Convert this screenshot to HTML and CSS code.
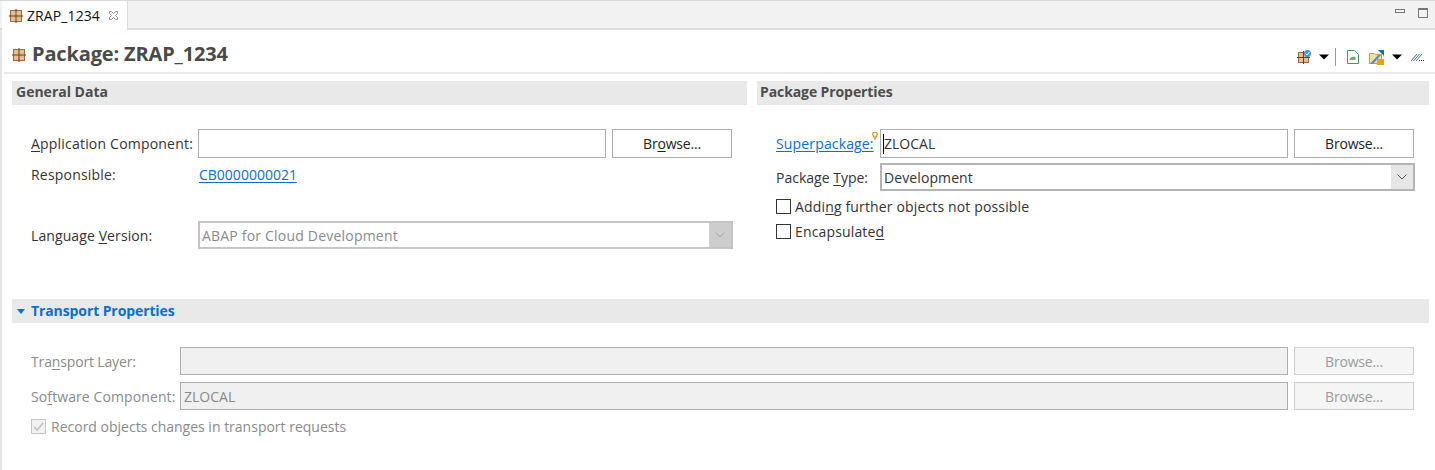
FILE: index.html
```html
<!DOCTYPE html>
<html>
	<head>
		<title>Package: ZRAP_1234</title>
		<link rel="stylesheet" href="styles.css">
	</head>
	<body>
		<svg class="defs" width="0" height="0">
			<symbol id="pkg" viewBox="0 0 14 14">
				<rect x="1.500" y="1.500" width="11" height="11" fill="#e3c08f" stroke="#a5673a"/>
				<path d="M7 0v14M0 7h14" stroke="#6b3d22" stroke-width="1"/>
			</symbol>
			<symbol id="caret" viewBox="0 0 10 6">
				<path d="M0 .5h10L5 5.500z" fill="#000"/>
			</symbol>
		</svg>

		<div class="tabbar">
			<div class="tab">
				<svg class="icon"><use href="#pkg"/></svg>
				<span class="tab-name">ZRAP_1234</span>
				<svg class="tab-close" viewBox="0 0 11 11"><path d="M1.500 1.500h2l2 2 2-2h2v2l-2 2 2 2v2h-2l-2-2-2 2h-2v-2l2-2-2-2z" fill="#fff" stroke="#8c8c8c"/></svg>
			</div>
			<div class="view-btns">
				<span class="min-btn"></span>
				<span class="max-btn"></span>
			</div>
		</div>

		<div class="page">
			<div class="head">
				<svg class="icon head-icon"><use href="#pkg"/></svg>
				<h1>Package: ZRAP_1234</h1>
				<div class="tools">
					<svg class="tool" viewBox="0 0 14 14">
						<rect x="1.500" y="2.500" width="10" height="10" fill="#e3c08f" stroke="#a5673a"/>
						<path d="M6.500 1v13M0 7.500h13" stroke="#6b3d22"/>
						<circle cx="10.500" cy="3.500" r="3.500" fill="#3f9be0"/>
						<path d="M8.500 3.500l1.500 1.500 2.500-3" fill="none" stroke="#fff"/>
					</svg>
					<svg class="caret"><use href="#caret"/></svg>
					<span class="tool-sep"></span>
					<svg class="tool tool-page" viewBox="0 0 12 14">
						<path d="M.5.500h7l4 4v9h-11z" fill="#fff" stroke="#3c9a5f"/>
						<path d="M2.500 10c.5-3 3-3.500 6-3v3H4z" fill="#58b078"/>
					</svg>
					<svg class="tool tool-folder" viewBox="0 0 16 15">
						<path d="M.5 3.500h5l1 1h6v9h-12z" fill="#f6dda0" stroke="#c79a50"/>
						<path d="M1 14L9 5h3L4 14z" fill="#4a90d0"/>
						<path d="M9 0h6v6z" fill="#0f6db5"/>
						<rect x="8" y="9" width="7" height="6" fill="#e8a020"/>
					</svg>
					<svg class="caret"><use href="#caret"/></svg>
					<svg class="tool tool-lines" viewBox="0 0 14 14">
						<path d="M0 11L6 4M2.500 11L8.500 4M5 11l6-7" stroke="#4a78a8" fill="none"/>
						<path d="M8 10.500h1M10 10.500h1M12 10.500h1" stroke="#333"/>
					</svg>
				</div>
			</div>

			<div class="columns">
				<section>
					<h2 class="sec-title">General Data</h2>
					<div class="form">
						<div class="row">
							<label class="lbl lbl-app"><u>A</u>pplication Component:</label>
							<span class="field"></span>
							<button class="btn">Br<u>o</u>wse...</button>
						</div>
						<div class="row row-resp">
							<label class="lbl lbl-app">Responsible:</label>
							<a class="link link-resp" href="#">CB0000000021</a>
						</div>
						<div class="row row-lang">
							<label class="lbl lbl-app lbl-tight">Language <u>V</u>ersion:</label>
							<span class="combo combo-off">
								<span class="combo-text">ABAP for Cloud Development</span>
								<span class="combo-arrow">
									<svg viewBox="0 0 10 6"><path d="M.5.500L5 5 9.500.5" fill="none" stroke="#a8a8a8"/></svg>
								</span>
							</span>
						</div>
					</div>
				</section>
				<section>
					<h2 class="sec-title sec-right">Package Properties</h2>
					<div class="form">
						<div class="row">
							<label class="lbl lbl-sup">
								<a class="link link-sup" href="#">Superpackage:</a>
								<svg class="bulb" viewBox="0 0 5 7"><path d="M.5 2a2 2 0 1 1 4 0c0 1-1 1.500-1 2.500h-2c0-1-1-1.500-1-2.500zM1.500 6h2" fill="#fff4d8" stroke="#d9862b"/></svg>
							</label>
							<span class="field"><span class="caret-line"></span>ZLOCAL</span>
							<button class="btn">Browse...</button>
						</div>
						<div class="row row-type">
							<label class="lbl lbl-sup lbl-plain">Package <u>T</u>ype:</label>
							<span class="combo">
								<span class="combo-text">Development</span>
								<span class="combo-arrow">
									<svg viewBox="0 0 10 6"><path d="M.5.500L5 5 9.500.5" fill="none" stroke="#555"/></svg>
								</span>
							</span>
						</div>
						<div class="check-row check-first"><span class="check"></span>Addi<u>n</u>g further objects not possible</div>
						<div class="check-row"><span class="check"></span>Encapsulate<u>d</u></div>
					</div>
				</section>
			</div>

			<section class="transport">
				<h2 class="sec-title sec-link">
					<svg class="twisty" viewBox="0 0 8 5"><path d="M0 0h8L4 5z" fill="#0a6ed1"/></svg>
					Transport Properties
				</h2>
				<div class="form form-trans">
					<div class="row">
						<label class="lbl lbl-trans lbl-layer">Tra<u>n</u>sport Layer:</label>
						<span class="field field-off"></span>
						<button class="btn btn-off">Browse...</button>
					</div>
					<div class="row row-soft">
						<label class="lbl lbl-trans lbl-tight">So<u>f</u>tware Component:</label>
						<span class="field field-off">ZLOCAL</span>
						<button class="btn btn-off">Browse...</button>
					</div>
					<div class="check-row check-off">
						<span class="check check-on">
							<svg viewBox="0 0 14 14"><path d="M2.500 7.500L5.500 11 12 3" fill="none" stroke="#bdbdbd" stroke-width="1.500"/></svg>
						</span>
						Record objects changes in transport requests
					</div>
				</div>
			</section>
		</div>
	</body>
</html>
```

FILE: styles.css
```css
* {
	margin: 0; padding: 0;
	box-sizing: border-box;
}

body {
	font-family: "Open Sans", "Noto Sans", sans-serif;
	font-size: 14px;
	color: #333;
	background: #fff;
	overflow: hidden;
	height: 470px;
}

.defs {
	position: absolute;
}

.icon {
	width: 14px; height: 14px;
	display: block;
	flex: none;
}

u {
	text-underline-offset: 2px;
}

/* tab strip */
.tabbar {
	display: flex;
	height: 30px;
	background: #f2f2f2;
	border-top: 1px solid #d9d9d9;
	border-bottom: 2px solid #dcdcdc;
	padding-left: 2px;
}

.tab {
	display: flex;
	align-items: center;
	width: 126px;
	height: 29px;
	padding-left: 7px;
	background: #fff;
	border-right: 1px solid #d9d9d9;
	color: #111;
}

.tab-name {
	margin-left: 4px;
	letter-spacing: 0.1px;
}

.tab-close {
	width: 11px; height: 11px;
	margin-left: 8px;
}

.view-btns {
	margin-left: auto;
	display: flex;
	align-items: flex-start;
	padding-top: 7px;
	padding-right: 7px;
}

.min-btn {
	width: 10px; height: 4px;
	border: 1px solid #777;
	margin-top: 1px;
	margin-right: 13px;
}

.max-btn {
	width: 10px; height: 10px;
	border: 1px solid #777;
	border-top-width: 2px;
}

/* page */
.page {
	height: 440px;
	border-left: 2px solid #e6e6e6;
	padding-left: 10px;
}

.head {
	display: flex;
	align-items: center;
	height: 44px;
	margin-left: -8px;
	padding-left: 8px;
	padding-top: 4px;
	border-bottom: 2px solid #e8e8e8;
}

.head-icon {
	margin-top: 3px;
}

h1 {
	font-size: 20px;
	font-weight: 700;
	color: #4a4a4a;
	margin-left: 6px;
	letter-spacing: -0.15px;
}

.tools {
	margin-left: auto;
	display: flex;
	align-items: center;
	padding-right: 10px;
	padding-top: 8px;
}

.tool {
	width: 14px; height: 14px;
	display: block;
}

.tool-page {
	width: 12px;
}

.tool-folder {
	width: 16px; height: 15px;
	margin-left: 10px;
	margin-right: -1px;
}

.tool-lines {
	margin-left: 9px;
}

.caret {
	width: 10px; height: 6px;
	margin-left: 8px;
}

.tool-sep {
	width: 1px; height: 18px;
	background: #999;
	margin: 0 11px 0 6px;
}

.columns {
	display: grid;
	grid-template-columns: 735px 672px;
	column-gap: 10px;
	margin-top: 7px;
}

.sec-title {
	height: 24px;
	padding-left: 4px;
	background: #e9e9e9;
	font-size: 14px;
	font-weight: 700;
	line-height: 22px;
	color: #4d4d4d;
}

.sec-right {
	padding-left: 3px;
	letter-spacing: -0.1px;
}

.sec-link {
	display: flex;
	align-items: center;
	color: #0a6ed1;
	letter-spacing: -0.1px;
}

.twisty {
	width: 8px; height: 5px;
	margin: 1px 6px 0 1px;
}

.form {
	padding: 24px 0 0 19px;
	color: #333;
}

.row {
	display: flex;
	align-items: center;
}

.lbl {
	flex: none;
	white-space: nowrap;
	letter-spacing: 0.2px;
}

.lbl-app { width: 167px; }
.lbl-sup { width: 104px; position: relative; }
.lbl-trans { width: 149px; color: #8a8a8a; }
.lbl-tight { letter-spacing: 0.1px; }
.lbl-plain { letter-spacing: 0; }
.lbl-layer { letter-spacing: -0.15px; }

.link {
	color: #0a6ed1;
	text-decoration: underline;
	text-underline-offset: 2px;
}

.link-resp {
	margin-left: 1px;
}

.link-sup {
	letter-spacing: 0.15px;
}

.bulb {
	position: absolute;
	top: -2px; left: 96px;
	width: 6px; height: 8px;
}

.field {
	display: flex;
	align-items: center;
	position: relative;
	width: 408px;
	height: 29px;
	padding-left: 3px;
	border: 1px solid #adadad;
	background: #fff;
	color: #333;
}

.form-trans .field {
	width: 1108px;
	height: 28px;
}

.field-off {
	background: #f0f0f0;
	color: #8a8a8a;
}

.caret-line {
	position: absolute;
	left: 2px; top: 4px;
	width: 1px; height: 20px;
	background: #000;
}

.btn {
	flex: none;
	width: 120px;
	height: 29px;
	margin-left: 6px;
	border: 1px solid #adadad;
	background: #fff;
	font: inherit;
	color: #222;
	letter-spacing: -0.2px;
}

.form-trans .btn {
	height: 28px;
}

.btn-off {
	background: #f5f5f5;
	border-color: #cfcfcf;
	color: #9a9a9a;
}

.row-resp {
	margin-top: 5px;
	height: 23px;
}

.row-lang {
	margin-top: 35px;
}

.row-type {
	margin-top: 5px;
}

.row-soft {
	margin-top: 7px;
}

.combo {
	display: flex;
	align-items: center;
	width: 535px;
	height: 28px;
	border: 2px solid #b4b4b4;
	background: #fff;
	color: #333;
	letter-spacing: 0.1px;
}

.combo-off {
	color: #8a8a8a;
	letter-spacing: 0.2px;
	border-color: #c4c4c4;
}

.combo-text {
	flex: 1;
	padding-left: 2px;
}

.combo-arrow {
	display: flex;
	align-items: center;
	justify-content: center;
	width: 22px;
	height: 100%;
	background: #e6e6e6;
}

.combo-off .combo-arrow {
	background: #cdcdcd;
}

.combo-arrow svg {
	width: 10px; height: 6px;
}

.check-row {
	display: flex;
	align-items: center;
	height: 25px;
	letter-spacing: 0.15px;
	color: #333;
}

.check-first {
	margin-top: 3px;
}

.check {
	display: block;
	width: 15px; height: 15px;
	margin-right: 4px;
	border: 1px solid #333;
	background: #fff;
}

.check-off {
	height: 24px;
	margin-top: 4px;
	letter-spacing: 0;
	color: #8a8a8a;
}

.check-off .check {
	margin-right: 5px;
}

.check-on {
	border-color: #c4c4c4;
	background: #f2f2f2;
}

.check-on svg {
	display: block;
	width: 13px; height: 13px;
}

.transport {
	width: 1417px;
	margin-top: 50px;
}
```
